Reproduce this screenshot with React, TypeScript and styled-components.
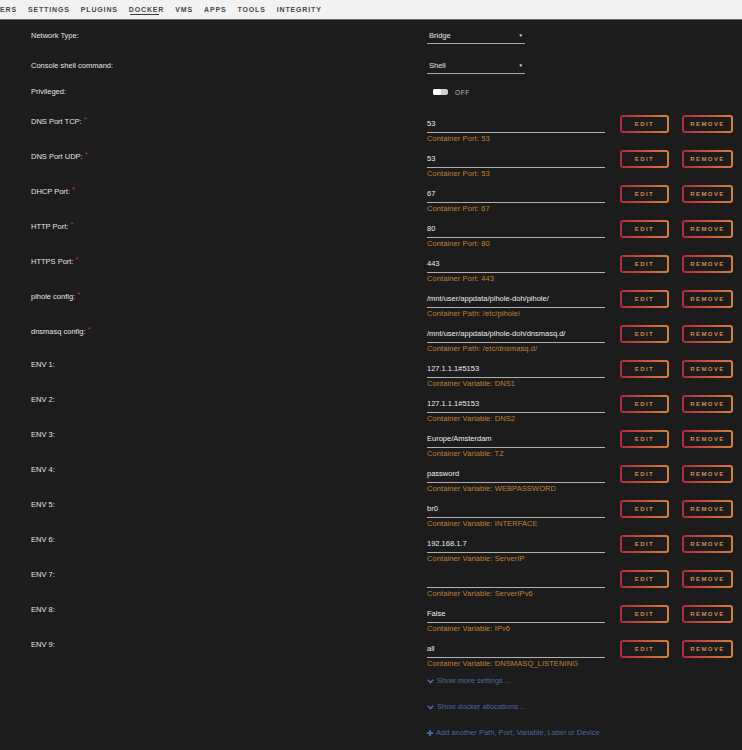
import React from "react";
import styled, { createGlobalStyle } from "styled-components";

type PortRow = {
  label: string;
  value: string;
  hint: string;
  required?: boolean;
};

const GlobalStyle = createGlobalStyle`
  html, body {
    margin: 0;
    padding: 0;
    background: #1c1c1c;
  }
  body {
    font-family: "Liberation Sans", Arial, sans-serif;
    -webkit-font-smoothing: antialiased;
  }
`;

const Page = styled.div`
  width: 742px;
  min-height: 750px;
  background: #1c1c1c;
  overflow: hidden;
`;

const TopNav = styled.nav`
  height: 19px;
  display: flex;
  align-items: center;
  gap: 11px;
  background: #f2f2f2;
  border-bottom: 1px solid #6a6a6a;
  white-space: nowrap;
`;

const NavItem = styled.a<{ active?: boolean }>`
  position: relative;
  font-size: 7px;
  font-weight: bold;
  letter-spacing: 0.85px;
  color: #474747;
  text-transform: uppercase;
  line-height: 19px;

  &::after {
    content: "";
    display: ${({ active }) => (active ? "block" : "none")};
    position: absolute;
    left: 1px;
    right: 5px;
    bottom: 4px;
    height: 1px;
    background: #3a3a3a;
  }
`;

const Main = styled.main`
  padding: 8px 0 12px 31px;
`;

const Row = styled.div<{ center?: boolean }>`
  display: flex;
  align-items: ${({ center }) => (center ? "center" : "flex-start")};
`;

const Label = styled.div`
  width: 396px;
  flex-shrink: 0;
  font-size: 7.5px;
  line-height: 10px;
  color: #e4e4e4;
`;

const Required = styled.span`
  color: #d2343a;
  font-size: 7px;
  vertical-align: 2px;
  margin-left: 2px;
`;

const Select = styled.div`
  width: 98px;
  height: 16px;
  box-sizing: border-box;
  display: flex;
  align-items: center;
  justify-content: space-between;
  padding: 0 2px 0 2px;
  border-bottom: 1px solid #a8a8a8;
  font-size: 7.5px;
  color: #e4e4e4;
`;

const Caret = styled.span`
  font-size: 4.5px;
  color: #e4e4e4;
`;

const Toggle = styled.div`
  display: flex;
  align-items: center;
  gap: 7px;
  margin-left: 6px;
  font-size: 6.5px;
  letter-spacing: 0.6px;
  color: #bdbdbd;
`;

const Track = styled.span`
  width: 15px;
  height: 6px;
  border-radius: 2px;
  background: #cfcfcf;
  display: flex;
`;

const Knob = styled.span`
  width: 8px;
  height: 6px;
  border-radius: 2px;
  background: #ffffff;
`;

const Field = styled.div`
  width: 178px;
  flex-shrink: 0;
`;

const Input = styled.div`
  box-sizing: border-box;
  height: 18px;
  padding: 4px 0 3px 0;
  border-bottom: 1px solid #b0b0b0;
  font-size: 7.5px;
  line-height: 10px;
  color: #ececec;
  white-space: nowrap;
`;

const Hint = styled.div`
  font-size: 7.5px;
  line-height: 10px;
  color: #c08033;
  margin-top: 1px;
  letter-spacing: 0.1px;
`;

const Actions = styled.div`
  display: flex;
  gap: 13px;
  margin-left: 15px;
`;

const ActionButton = styled.button<{ wide?: boolean }>`
  width: ${({ wide }) => (wide ? "51px" : "49px")};
  height: 18px;
  box-sizing: border-box;
  padding: 0;
  border: 2px solid transparent;
  border-radius: 3px;
  background:
    linear-gradient(#1c1c1c, #1c1c1c) padding-box,
    linear-gradient(90deg, #b12a3a, #d97f38) border-box;
  font-family: "Liberation Sans", Arial, sans-serif;
  font-size: 6px;
  font-weight: bold;
  letter-spacing: 1.4px;
  color: #d68a48;
  text-transform: uppercase;
  cursor: pointer;
`;

const LinkLine = styled.a`
  display: flex;
  align-items: center;
  gap: 3px;
  margin-left: 396px;
  font-size: 7.5px;
  line-height: 10px;
  color: #4a6aa2;
`;

const Spacer = styled.div<{ h: number }>`
  height: ${({ h }) => h}px;
`;

const ports: PortRow[] = [
  { label: "DNS Port TCP:", value: "53", hint: "Container Port: 53", required: true },
  { label: "DNS Port UDP:", value: "53", hint: "Container Port: 53", required: true },
  { label: "DHCP Port:", value: "67", hint: "Container Port: 67", required: true },
  { label: "HTTP Port:", value: "80", hint: "Container Port: 80", required: true },
  { label: "HTTPS Port:", value: "443", hint: "Container Port: 443", required: true },
  { label: "pihole config:", value: "/mnt/user/appdata/pihole-doh/pihole/", hint: "Container Path: /etc/pihole/", required: true },
  { label: "dnsmasq config:", value: "/mnt/user/appdata/pihole-doh/dnsmasq.d/", hint: "Container Path: /etc/dnsmasq.d/", required: true },
  { label: "ENV 1:", value: "127.1.1.1#5153", hint: "Container Variable: DNS1" },
  { label: "ENV 2:", value: "127.1.1.1#5153", hint: "Container Variable: DNS2" },
  { label: "ENV 3:", value: "Europe/Amsterdam", hint: "Container Variable: TZ" },
  { label: "ENV 4:", value: "password", hint: "Container Variable: WEBPASSWORD" },
  { label: "ENV 5:", value: "br0", hint: "Container Variable: INTERFACE" },
  { label: "ENV 6:", value: "192.168.1.7", hint: "Container Variable: ServerIP" },
  { label: "ENV 7:", value: "", hint: "Container Variable: ServerIPv6" },
  { label: "ENV 8:", value: "False", hint: "Container Variable: IPv6" },
  { label: "ENV 9:", value: "all", hint: "Container Variable: DNSMASQ_LISTENING" },
];

const navItems = ["ers", "settings", "plugins", "docker", "vms", "apps", "tools", "integrity"];

function Chevron() {
  return (
    <svg width="7" height="5" viewBox="0 0 7 5">
      <path d="M0.8 0.8 L3.5 3.6 L6.2 0.8" fill="none" stroke="#4a6aa2" strokeWidth="1.6" />
    </svg>
  );
}

function Plus() {
  return (
    <svg width="6" height="6" viewBox="0 0 6 6">
      <path d="M3 0 V6 M0 3 H6" stroke="#4a6aa2" strokeWidth="1.8" />
    </svg>
  );
}

export default function App() {
  return (
    <Page>
      <GlobalStyle />
      <TopNav>
        {navItems.map((item) => (
          <NavItem key={item} active={item === "docker"}>
            {item}
          </NavItem>
        ))}
      </TopNav>
      <Main>
        <Row center>
          <Label>Network Type:</Label>
          <Select>
            Bridge <Caret>▼</Caret>
          </Select>
        </Row>
        <Spacer h={14} />
        <Row center>
          <Label>Console shell command:</Label>
          <Select>
            Shell <Caret>▼</Caret>
          </Select>
        </Row>
        <Spacer h={13} />
        <Row center>
          <Label>Privileged:</Label>
          <Toggle>
            <Track>
              <Knob />
            </Track>
            OFF
          </Toggle>
        </Row>
        <Spacer h={18} />
        {ports.map((p) => (
          <Row key={p.label} style={{ marginBottom: 6 }}>
            <Label>
              {p.label}
              {p.required && <Required>*</Required>}
            </Label>
            <Field>
              <Input>{p.value}</Input>
              <Hint>{p.hint}</Hint>
            </Field>
            <Actions>
              <ActionButton>Edit</ActionButton>
              <ActionButton wide>Remove</ActionButton>
            </Actions>
          </Row>
        ))}
        <Spacer h={1} />
        <LinkLine>
          <Chevron /> Show more settings ...
        </LinkLine>
        <Spacer h={16} />
        <LinkLine>
          <Chevron /> Show docker allocations ...
        </LinkLine>
        <Spacer h={16} />
        <LinkLine>
          <Plus /> Add another Path, Port, Variable, Label or Device
        </LinkLine>
      </Main>
    </Page>
  );
}
